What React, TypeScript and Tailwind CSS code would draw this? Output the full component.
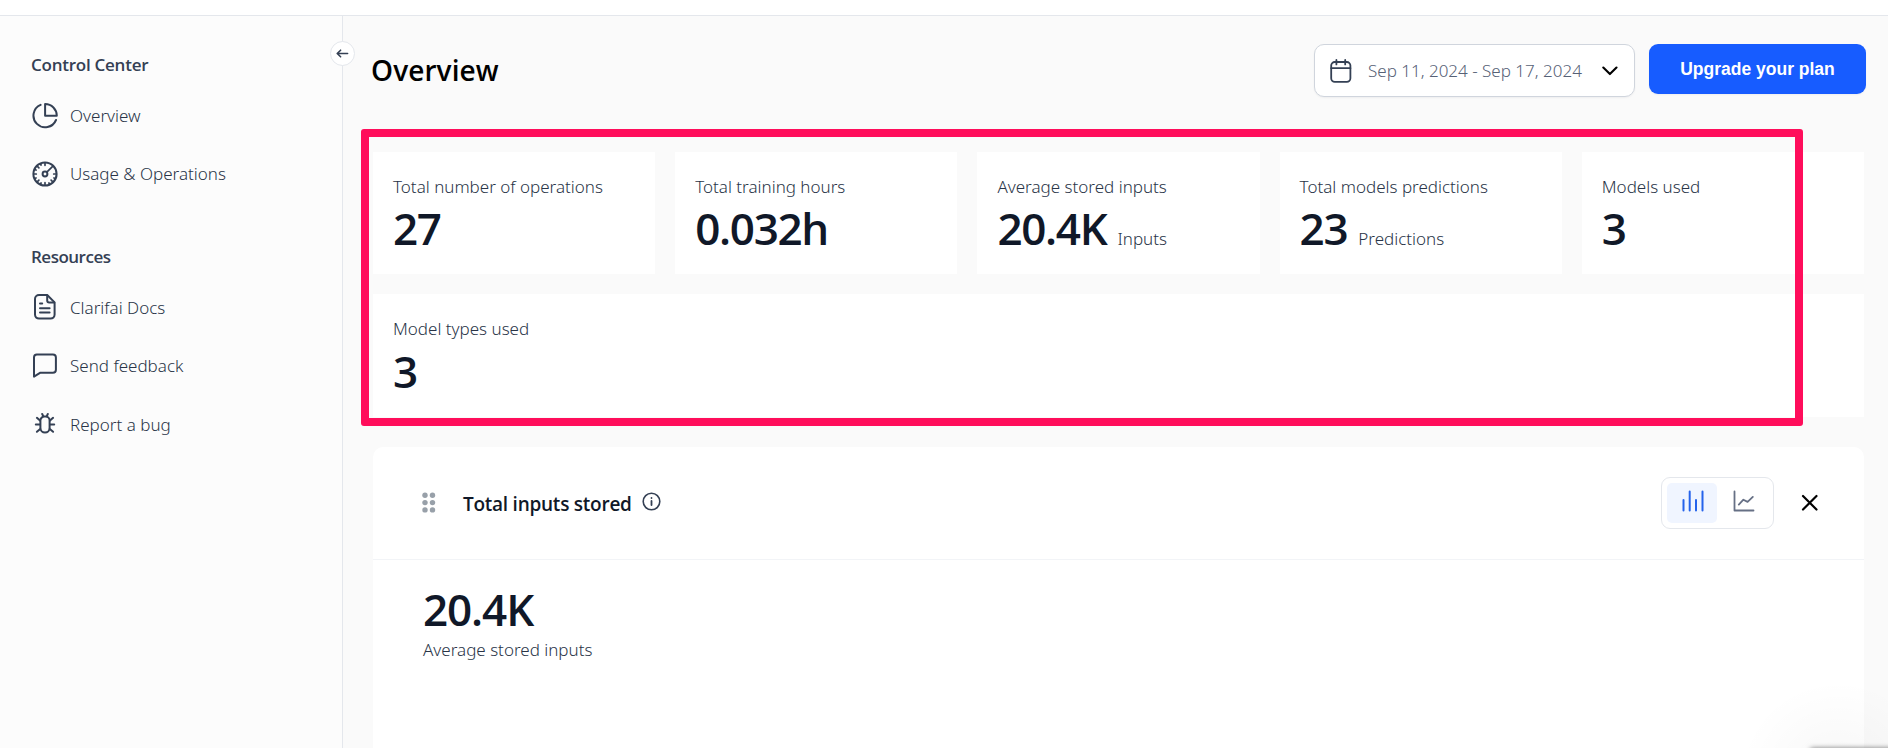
import type { ReactNode } from 'react';

const OUTLINE = {
  fill: 'none',
  stroke: 'currentColor',
  strokeLinecap: 'round',
  strokeLinejoin: 'round',
} as const;

function PieIcon() {
  return (
    <svg width="26" height="26" viewBox="0 0 26 26" strokeWidth="2" {...OUTLINE}>
      <path d="M8.6 1.8A11.7 11.7 0 1 0 24 17" />
      <path d="M13.1 1a11.7 11.7 0 0 1 11.7 11.8H13.1z" />
    </svg>
  );
}

function GaugeIcon() {
  return (
    <svg width="26" height="26" viewBox="0 0 26 26" strokeWidth="2" {...OUTLINE}>
      <circle cx="13" cy="13" r="11.6" />
      <circle cx="13" cy="13" r="2.4" />
      <path d="M14.8 11.2 20.4 5.6M13 1.9v2.4M13 21.7v2.4M1.9 13h2.4M21.7 13h2.4M5.2 5.2l1.7 1.7M5.2 20.8l1.7-1.7M20.8 20.8l-1.7-1.7M3 8.6l1 .5M8.6 3l.5 1M3 17.4l1-.5M17.4 23l-.5-1M8.6 23l.5-1M23 17.4l-1-.5" strokeWidth="1.7" />
    </svg>
  );
}

function DocIcon() {
  return (
    <svg width="26" height="26" viewBox="0 0 26 26" strokeWidth="2" {...OUTLINE}>
      <path d="M15.2 1H7a4 4 0 0 0-4 4v15.6a4 4 0 0 0 4 4h11.6a4 4 0 0 0 4-4V8.4z" />
      <path d="M15.2 1.4v5a2 2 0 0 0 2 2h5M8 9.6h2.2M8 14.2h9.6M8 18.6h9.6" />
    </svg>
  );
}

function ChatIcon() {
  return (
    <svg width="26" height="26" viewBox="0 0 26 26" strokeWidth="2" {...OUTLINE}>
      <path d="M4.9 2.5h16a3 3 0 0 1 3 3v12.2a3 3 0 0 1-3 3H8.4L2 24.6V5.5a3 3 0 0 1 2.9-3z" />
    </svg>
  );
}

function BugIcon() {
  return (
    <svg width="26" height="26" viewBox="0 0 26 26" strokeWidth="2" {...OUTLINE}>
      <path d="M12.4 6.6h1.2a4 4 0 0 1 4 4v7.4a4.6 4.6 0 0 1-9.2 0v-7.4a4 4 0 0 1 4-4z" />
      <path d="M11.2 6.2 10.2 4M14.8 6.2 15.8 4M8 10.6 4.9 7.8M18 10.6l3.1-2.8M8 14.6H3.8M18 14.6h4.2M8.2 19l-3.3 2.8M17.8 19l3.3 2.8" />
    </svg>
  );
}

function SidebarItem({ icon, label, textClass = '' }: { icon: ReactNode; label: string; textClass?: string }) {
  return (
    <a className="flex h-[58px] items-center gap-3">
      {icon}
      <span className={`text-[17px] leading-6 font-light text-[#293447] ${textClass}`}>{label}</span>
    </a>
  );
}

function Stat({ label, value, unit, wide }: { label: string; value: string; unit?: string; wide?: boolean }) {
  return (
    <div className={wide ? 'col-span-5 h-[123px] bg-white px-5 pt-[23px]' : 'h-[122px] bg-white px-5 pt-[23px]'}>
      <div className="text-[17px] leading-6 font-light text-[#293447]">{label}</div>
      <div className={wide ? 'mt-1.5 flex items-baseline' : 'mt-[5px] flex items-baseline'}>
        <span className="font-['Open_Sans'] text-[44px] leading-[48px] font-semibold tracking-[-1.3px] text-[#101828]">{value}</span>
        {unit && <span className="ml-[11px] text-[17px] leading-6 font-light text-[#293447]">{unit}</span>}
      </div>
    </div>
  );
}

export default function App() {
  return (
    <div className="relative flex h-[748px] w-[1888px] flex-col overflow-hidden bg-[#fafafa] font-['Noto_Sans','Open_Sans',sans-serif] text-[#344054]">
      <header className="h-4 shrink-0 border-b border-[#e4e7ec] bg-white" />
      <div className="flex min-h-0 flex-1">
        <aside className="relative w-[343px] shrink-0 border-r border-[#e4e7ec] bg-[#fcfcfc] pt-[37px] pl-8">
          <h2 className="-ml-px font-['Open_Sans'] text-[17px] leading-6 font-semibold tracking-[-0.25px]">Control Center</h2>
          <nav className="mt-2.5">
            <SidebarItem icon={<PieIcon />} label="Overview" />
            <SidebarItem icon={<GaugeIcon />} label="Usage &amp; Operations" />
          </nav>
          <h2 className="mt-[42px] -ml-px font-['Open_Sans'] text-[17px] leading-6 font-semibold tracking-[-0.5px]">Resources</h2>
          <nav className="mt-[9px]">
            <SidebarItem icon={<DocIcon />} label="Clarifai Docs" textClass="mt-0.5" />
            <SidebarItem icon={<ChatIcon />} label="Send feedback" textClass="mt-0.5" />
            <SidebarItem icon={<BugIcon />} label="Report a bug" textClass="mt-[3px]" />
          </nav>
          <button className="absolute top-[25px] -right-[13px] flex h-[25px] w-[25px] items-center justify-center rounded-full border border-[#e4e7ec] bg-white">
            <svg width="13" height="11" viewBox="0 0 13 11" strokeWidth="1.6" {...OUTLINE}>
              <path d="M11.6 5.5H1.3M4.6 2.2 1.2 5.5l3.4 3.3" />
            </svg>
          </button>
        </aside>

        <main className="min-w-0 flex-1 pt-7 pr-6 pl-[30px]">
          <div className="-mr-0.5 flex h-[53px] items-start">
            <h1 className="mt-1.5 -ml-0.5 flex-1 font-['Open_Sans'] text-[28px] leading-10 font-semibold tracking-[0.1px] text-black">Overview</h1>
            <button className="flex h-[53px] w-[321px] items-center rounded-[10px] border border-[#d0d5dd] bg-white pl-[15px] shadow-[0_1px_2px_rgba(16,24,40,0.05)]">
              <svg width="22" height="24" viewBox="0 0 22 24" strokeWidth="1.8" {...OUTLINE}>
                <rect x="1.2" y="3" width="19.2" height="19.8" rx="3.6" />
                <path d="M1.2 9.2h19.2M6.4 1v4.4M15.2 1v4.4" />
              </svg>
              <span className="ml-4 text-[17px] leading-6 font-light whitespace-nowrap text-[#566176]">Sep 11, 2024 - Sep 17, 2024</span>
              <svg className="mr-4 ml-auto text-black" width="16" height="10" viewBox="0 0 16 10" strokeWidth="2.1" {...OUTLINE}>
                <path d="m1.3 1.5 6.6 6.6 6.6-6.6" />
              </svg>
            </button>
            <button className="ml-3.5 h-[50px] w-[217px] rounded-[9px] bg-[#175cff] font-['Liberation_Sans'] text-[17.5px] leading-[50px] font-bold text-white shadow-[0_1px_2px_rgba(16,24,40,0.05)]">
              Upgrade your plan
            </button>
          </div>

          <section className="mt-[55px] grid grid-cols-5 gap-5">
            <Stat label="Total number of operations" value="27" />
            <Stat label="Total training hours" value="0.032h" />
            <Stat label="Average stored inputs" value="20.4K" unit="Inputs" />
            <Stat label="Total models predictions" value="23" unit="Predictions" />
            <Stat label="Models used" value="3" />
            <Stat label="Model types used" value="3" wide />
          </section>

          <section className="mt-[30px] h-[320px] rounded-t-[10px] bg-white">
            <div className="flex h-[113px] items-center border-b border-[#f2f4f7] pr-[45px] pl-[49px]">
              <svg width="14" height="22" viewBox="0 0 14 22" className="fill-[#98a0a9]">
                <circle cx="3" cy="3.3" r="2.7" />
                <circle cx="10.5" cy="3.3" r="2.7" />
                <circle cx="3" cy="10.6" r="2.7" />
                <circle cx="10.5" cy="10.6" r="2.7" />
                <circle cx="3" cy="17.9" r="2.7" />
                <circle cx="10.5" cy="17.9" r="2.7" />
              </svg>
              <h3 className="mt-0.5 ml-[27px] font-['Open_Sans'] text-[19px] leading-7 font-semibold tracking-[-0.25px] text-[#101828]">Total inputs stored</h3>
              <svg className="mb-1 ml-2.5" width="19" height="19" viewBox="0 0 19 19" strokeWidth="1.6" {...OUTLINE}>
                <circle cx="9.5" cy="9.5" r="8.3" />
                <path d="M9.5 9v4M9.5 5.9v.1" strokeWidth="1.8" />
              </svg>
              <div className="ml-auto flex h-[52px] w-[113px] items-center rounded-[9px] border border-[#e4e7ec] bg-white pl-[5px]">
                <span className="flex h-10 w-[50px] items-center justify-center rounded-[5px] bg-[#f0f5ff] pl-px text-[#2563eb]">
                  <svg className="-mt-1" width="22" height="22" viewBox="0 0 22 22" strokeWidth="2" {...OUTLINE}>
                    <path d="M1.5 10v10.5M7.7 1.5v19M14 10v10.5M20.5 1.5v19" />
                  </svg>
                </span>
                <span className="ml-px flex h-10 w-[50px] items-center justify-center pl-px text-[#667085]">
                  <svg className="-mt-1" width="22" height="22" viewBox="0 0 22 22" strokeWidth="1.8" {...OUTLINE}>
                    <path d="M1.5 1.5v19h19M5.8 14.6l4.6-4.9 4.2 2.2 5.2-5" />
                  </svg>
                </span>
              </div>
              <svg className="ml-[27px] text-black" width="18" height="18" viewBox="0 0 18 18" strokeWidth="2.2" {...OUTLINE}>
                <path d="m2 2 13.5 13.5M15.5 2 2 15.5" />
              </svg>
            </div>
            <div className="pt-[25px] pl-[50px]">
              <div className="font-['Open_Sans'] text-[44px] leading-[48px] font-semibold tracking-[-1.1px] text-[#101828]">20.4K</div>
              <div className="mt-[5px] text-[17px] leading-6 font-light text-[#293447]">Average stored inputs</div>
            </div>
          </section>
        </main>
      </div>

      <div className="pointer-events-none absolute top-[129px] left-[361px] h-[297px] w-[1442px] rounded-[3px] border-8 border-[#ff0d5b]" />
      <div className="pointer-events-none absolute right-0 bottom-0 h-[68px] w-[150px] bg-[radial-gradient(circle_at_100px_100px,rgba(0,0,0,0.035),rgba(0,0,0,0)_100px)]" />
      <div className="pointer-events-none absolute top-[748px] left-[1810px] h-10 w-[100px] rounded-[3px] shadow-[0_0_5px_rgba(0,0,0,0.5)]" />
    </div>
  );
}
